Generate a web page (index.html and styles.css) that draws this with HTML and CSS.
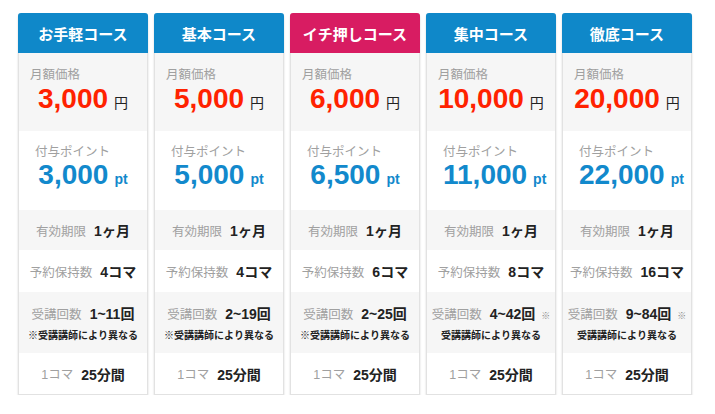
FILE: index.html
```html
<!DOCTYPE html>
<html lang="ja">
<head>
<meta charset="utf-8">
<link rel="stylesheet" href="styles.css">
</head>
<body>
<div class="plans">
  <div class="card">
    <div class="head">お手軽コース</div>
    <div class="price"><div class="plabel">月額価格</div><div class="pnum"><span class="yen-num">3,000</span><span class="yen">円</span></div></div>
    <div class="points"><div class="ptlabel">付与ポイント</div><div class="ptnum"><span class="pt-num">3,000</span><span class="pt">pt</span></div></div>
    <div class="row gray r1"><span class="lb">有効期限</span><span class="val">1ヶ月</span></div>
    <div class="row r2"><span class="lb">予約保持数</span><span class="val">4コマ</span></div>
    <div class="row gray r3"><div><span class="lb">受講回数</span><span class="val">1~11回</span></div><div class="note">※受講講師により異なる</div></div>
    <div class="row r4"><span class="lb">1コマ</span><span class="val">25分間</span></div>
  </div>
  <div class="card">
    <div class="head">基本コース</div>
    <div class="price"><div class="plabel">月額価格</div><div class="pnum"><span class="yen-num">5,000</span><span class="yen">円</span></div></div>
    <div class="points"><div class="ptlabel">付与ポイント</div><div class="ptnum"><span class="pt-num">5,000</span><span class="pt">pt</span></div></div>
    <div class="row gray r1"><span class="lb">有効期限</span><span class="val">1ヶ月</span></div>
    <div class="row r2"><span class="lb">予約保持数</span><span class="val">4コマ</span></div>
    <div class="row gray r3"><div><span class="lb">受講回数</span><span class="val">2~19回</span></div><div class="note">※受講講師により異なる</div></div>
    <div class="row r4"><span class="lb">1コマ</span><span class="val">25分間</span></div>
  </div>
  <div class="card">
    <div class="head pink">イチ押しコース</div>
    <div class="price"><div class="plabel">月額価格</div><div class="pnum"><span class="yen-num">6,000</span><span class="yen">円</span></div></div>
    <div class="points"><div class="ptlabel">付与ポイント</div><div class="ptnum"><span class="pt-num">6,500</span><span class="pt">pt</span></div></div>
    <div class="row gray r1"><span class="lb">有効期限</span><span class="val">1ヶ月</span></div>
    <div class="row r2"><span class="lb">予約保持数</span><span class="val">6コマ</span></div>
    <div class="row gray r3"><div><span class="lb">受講回数</span><span class="val">2~25回</span></div><div class="note">※受講講師により異なる</div></div>
    <div class="row r4"><span class="lb">1コマ</span><span class="val">25分間</span></div>
  </div>
  <div class="card">
    <div class="head">集中コース</div>
    <div class="price"><div class="plabel">月額価格</div><div class="pnum"><span class="yen-num">10,000</span><span class="yen">円</span></div></div>
    <div class="points"><div class="ptlabel">付与ポイント</div><div class="ptnum"><span class="pt-num">11,000</span><span class="pt">pt</span></div></div>
    <div class="row gray r1"><span class="lb">有効期限</span><span class="val">1ヶ月</span></div>
    <div class="row r2"><span class="lb">予約保持数</span><span class="val">8コマ</span></div>
    <div class="row gray r3"><div><span class="lb">受講回数</span><span class="val">4~42回</span><span class="mark">※</span></div><div class="note">受講講師により異なる</div></div>
    <div class="row r4"><span class="lb">1コマ</span><span class="val">25分間</span></div>
  </div>
  <div class="card">
    <div class="head">徹底コース</div>
    <div class="price"><div class="plabel">月額価格</div><div class="pnum"><span class="yen-num">20,000</span><span class="yen">円</span></div></div>
    <div class="points"><div class="ptlabel">付与ポイント</div><div class="ptnum"><span class="pt-num">22,000</span><span class="pt">pt</span></div></div>
    <div class="row gray r1"><span class="lb">有効期限</span><span class="val">1ヶ月</span></div>
    <div class="row r2"><span class="lb">予約保持数</span><span class="val">16コマ</span></div>
    <div class="row gray r3"><div><span class="lb">受講回数</span><span class="val">9~84回</span><span class="mark">※</span></div><div class="note">受講講師により異なる</div></div>
    <div class="row r4"><span class="lb">1コマ</span><span class="val">25分間</span></div>
  </div>
</div>
</body>
</html>
```

FILE: styles.css
```css
* { box-sizing: border-box; }
html, body { margin: 0; padding: 0; background: #fff; }
body {
  font-family: "Liberation Sans", "Noto Sans CJK JP", sans-serif;
  color: #222;
}
.plans {
  display: flex;
  gap: 6px;
  padding: 13px 0 0 18px;
}
.card {
  width: 130px;
  border: 1px solid #e2e2e2;
  border-top: none;
  border-radius: 3px 3px 0 0;
  box-shadow: 0 2px 2px rgba(0,0,0,0.18);
  display: flex;
  flex-direction: column;
  background: #fff;
}
.head {
  height: 40px;
  margin: 0 -1px;
  background: #0f88c9;
  color: #fff;
  font-weight: bold;
  font-size: 15px;
  display: flex;
  align-items: center;
  justify-content: center;
  border-radius: 3px 3px 0 0;
}
.head.pink { background: #d81c62; }
.price {
  height: 78px;
  background: #f6f6f6;
  padding: 13px 0 0 11px;
}
.plabel, .ptlabel {
  font-size: 12.5px;
  color: #a0a0a0;
  line-height: 18px;
}
.pnum, .ptnum {
  text-align: center;
  padding-right: 11px;
  line-height: 30px;
  white-space: nowrap;
}
.yen-num {
  color: #ff2200;
  font-size: 28px;
  font-weight: bold;
}
.yen {
  font-size: 14px;
  margin-left: 6px;
  color: #222;
}
.points {
  height: 79px;
  padding: 12px 0 0 16px;
}
.ptnum { padding-right: 16px; margin-top: -1px; }
.pt-num {
  color: #1289cc;
  font-size: 28px;
  font-weight: bold;
}
.pt {
  color: #1289cc;
  font-size: 14px;
  font-weight: bold;
  margin-left: 6px;
}
.row {
  display: flex;
  align-items: center;
  justify-content: center;
  gap: 8px;
  white-space: nowrap;
}
.row.gray { background: #f6f6f6; }
.r1 { height: 40px; }
.r2 { height: 42px; }
.r3 { height: 61px; flex-direction: column; gap: 4px; }
.r4 { height: 41px; }
.lb { font-size: 12.5px; color: #a0a0a0; }
.val { font-size: 14px; font-weight: bold; color: #222; }
.r3 .val { margin-left: 8px; }
.mark { font-size: 9px; color: #888; margin-left: 6px; }
.note { font-size: 10px; font-weight: bold; color: #222; }
```
